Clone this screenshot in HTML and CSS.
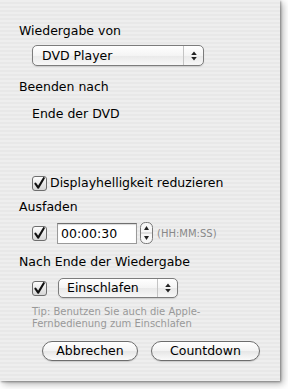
FILE: index.html
```html
<!DOCTYPE html>
<html>
<head>
<meta charset="utf-8">
<link rel="stylesheet" href="styles.css">
</head>
<body>
<div class="panel">
  <div class="label l1">Wiedergabe von</div>
  <div class="popup popup-source">
    <span class="popup-text">DVD Player</span>
    <span class="popup-arrows">
      <svg width="8" height="12" viewBox="0 0 8 12"><path d="M4 1.5 L6.8 5 L1.2 5 Z M4 10.5 L6.8 7 L1.2 7 Z" fill="#222"/></svg>
    </span>
  </div>
  <div class="label l2">Beenden nach</div>
  <div class="label l3">Ende der DVD</div>
  <div class="check-row r1">
    <svg class="cb" width="15" height="15" viewBox="0 0 15 15"><defs><linearGradient id="g1" x1="0" y1="0" x2="0" y2="1"><stop offset="0" stop-color="#ffffff"/><stop offset="1" stop-color="#d4d4d4"/></linearGradient></defs><rect x="0.5" y="0.5" width="14" height="14" rx="2.5" fill="url(#g1)" stroke="#6e6e6e"/><path d="M3.4 7.6 L6.2 11.6 L11.8 2.2" fill="none" stroke="#111" stroke-width="2.1" stroke-linecap="round" stroke-linejoin="round"/></svg>
    <span class="cb-text">Displayhelligkeit reduzieren</span>
  </div>
  <div class="label l4">Ausfaden</div>
  <div class="check-row r2">
    <svg class="cb" width="15" height="15" viewBox="0 0 15 15"><rect x="0.5" y="0.5" width="14" height="14" rx="2.5" fill="url(#g1)" stroke="#6e6e6e"/><path d="M3.4 7.6 L6.2 11.6 L11.8 2.2" fill="none" stroke="#111" stroke-width="2.1" stroke-linecap="round" stroke-linejoin="round"/></svg>
    <div class="textfield">00:00:30</div>
    <div class="stepper">
      <svg width="13" height="22" viewBox="0 0 13 22"><rect x="0.5" y="0.5" width="12" height="21" rx="5" fill="#f7f7f7" stroke="#7a7a7a"/><line x1="1" y1="11" x2="12" y2="11" stroke="#c8c8c8"/><path d="M6.5 4 L9 8 L4 8 Z M6.5 18 L9 14 L4 14 Z" fill="#222"/></svg>
    </div>
    <span class="hint">(HH:MM:SS)</span>
  </div>
  <div class="label l5">Nach Ende der Wiedergabe</div>
  <div class="check-row r3">
    <svg class="cb" width="15" height="15" viewBox="0 0 15 15"><rect x="0.5" y="0.5" width="14" height="14" rx="2.5" fill="url(#g1)" stroke="#6e6e6e"/><path d="M3.4 7.6 L6.2 11.6 L11.8 2.2" fill="none" stroke="#111" stroke-width="2.1" stroke-linecap="round" stroke-linejoin="round"/></svg>
    <div class="popup popup-sleep">
      <span class="popup-text">Einschlafen</span>
      <span class="popup-arrows">
        <svg width="8" height="12" viewBox="0 0 8 12"><path d="M4 1.5 L6.8 5 L1.2 5 Z M4 10.5 L6.8 7 L1.2 7 Z" fill="#222"/></svg>
      </span>
    </div>
  </div>
  <div class="tip">Tip: Benutzen Sie auch die Apple-<br>Fernbedienung zum Einschlafen</div>
  <div class="buttons">
    <div class="btn btn-cancel">Abbrechen</div>
    <div class="btn btn-go">Countdown</div>
  </div>
</div>
</body>
</html>
```
FILE: styles.css
```css
html, body {
  margin: 0;
  padding: 0;
  background: #ffffff;
}
body {
  width: 288px;
  height: 389px;
  overflow: hidden;
  font-family: "DejaVu Sans", "Liberation Sans", sans-serif;
  font-size: 12.5px;
  color: #000;
}
.panel {
  width: 280px;
  height: 381px;
  box-sizing: border-box;
  padding: 23px 0 0 19px;
  display: flex;
  flex-direction: column;
  align-items: flex-start;
  background: repeating-linear-gradient(to bottom, #eeeeee 0, #eeeeee 2px, #e8e8e8 2px, #e8e8e8 4px);
  box-shadow: 1px 1px 2px rgba(0,0,0,0.35), 3px 3px 7px rgba(0,0,0,0.3);
}
.label {
  line-height: 16px;
  height: 16px;
  white-space: nowrap;
}
.l2 { margin-top: 13px; }
.l3 { margin-top: 11px; margin-left: 13px; }
.l4 { margin-top: 8px; }
.l5 { margin-top: 10px; }

.popup {
  display: flex;
  align-items: center;
  box-sizing: border-box;
  border: 1px solid #7c7c7c;
  border-radius: 5px;
  background: linear-gradient(to bottom, #ffffff 0%, #f4f4f4 50%, #e9e9e9 51%, #f7f7f7 100%);
  box-shadow: 0 1px 1px rgba(0,0,0,0.12);
}
.popup-source {
  margin-top: 6px;
  margin-left: 13px;
  width: 172px;
  height: 21px;
}
.popup-text {
  flex: 1;
  padding-left: 9px;
  line-height: 16px;
  white-space: nowrap;
}
.popup-arrows {
  width: 19px;
  height: 100%;
  border-left: 1px solid #c4c4c4;
  display: flex;
  align-items: center;
  justify-content: center;
}
.popup-arrows svg { display: block; }

.check-row {
  display: flex;
  align-items: center;
  margin-left: 13px;
}
.cb { display: block; flex: none; }
.r1 { margin-top: 53px; height: 16px; }
.cb-text { margin-left: 3px; line-height: 16px; white-space: nowrap; }

.r2 { margin-top: 7px; height: 22px; }
.textfield {
  margin-left: 10px;
  width: 80px;
  height: 21px;
  box-sizing: border-box;
  background: #fff;
  border: 1px solid #9a9a9a;
  border-top-color: #6f6f6f;
  box-shadow: inset 0 1px 1px rgba(0,0,0,0.15);
  padding-left: 3px;
  line-height: 19px;
}
.stepper { margin-left: 3px; height: 22px; }
.stepper svg { display: block; }
.hint {
  margin-left: 4px;
  font-size: 10px;
  color: #888;
  white-space: nowrap;
}

.r3 { margin-top: 8px; height: 20px; }
.popup-sleep {
  margin-left: 11px;
  width: 120px;
  height: 20px;
}
.popup-sleep .popup-text { padding-left: 8px; }

.tip {
  margin-top: 8px;
  margin-left: 13px;
  font-size: 10px;
  line-height: 12px;
  color: #999;
  white-space: nowrap;
}
.buttons {
  margin-top: 11px;
  margin-left: 23px;
  display: flex;
  gap: 13px;
}
.btn {
  height: 20px;
  box-sizing: border-box;
  border: 1px solid #6d6d6d;
  border-radius: 10px;
  background: linear-gradient(to bottom, #ffffff 0%, #f3f3f3 50%, #e6e6e6 51%, #fafafa 100%);
  box-shadow: 0 1px 1px rgba(0,0,0,0.15);
  display: flex;
  align-items: center;
  justify-content: center;
  line-height: 16px;
}
.btn-cancel { width: 96px; }
.btn-go { width: 109px; }
```
